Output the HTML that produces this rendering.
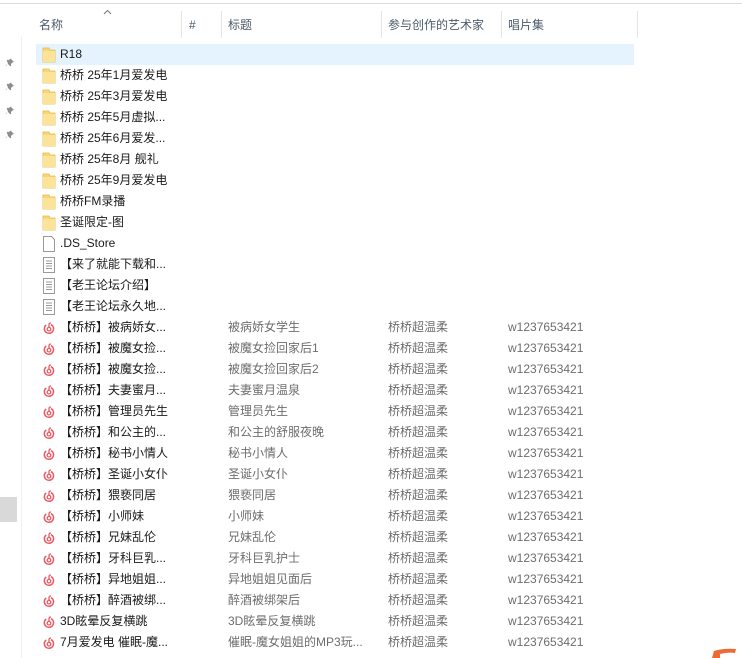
<!DOCTYPE html><html><head><meta charset="utf-8"><style>
body{margin:0;width:742px;height:658px;background:#fff;overflow:hidden;position:relative;font-family:"Liberation Sans","Noto Sans CJK SC",sans-serif;font-size:12px}
.a{position:absolute}
.h{position:absolute;top:17px;color:#4c5a6a;font-size:12px;line-height:16px}
.sep{position:absolute;top:11px;width:1px;height:27px;background:#e5e5e5}
.r{position:absolute;left:36px;width:598px;height:21px}
.r span{position:absolute;top:2px;white-space:nowrap;line-height:17px;height:17px}
.n{left:24px;color:#1a1a1a}
.t{left:192px;color:#6d6d6d}
.ar{left:352px;color:#6d6d6d}
.al{left:472px;color:#6d6d6d}
.ic{position:absolute;left:6px;top:3px}
.pin{position:absolute;left:5px}
</style></head><body>
<div class="a" style="left:0;top:3px;width:742px;height:1px;background:#dcdcdc"></div>
<div class="a" style="left:21px;top:36px;width:1px;height:622px;background:#f0f0f0"></div>
<div class="a" style="left:0;top:497px;width:17px;height:25px;background:#d9d9d9"></div>
<svg width="0" height="0" style="position:absolute"><defs>
<symbol id="p" viewBox="0 0 10 10"><path d="M5 1l4 4-1.5.5-1.5 1.5.2 1.8-1 .4L2.6 6.6 1 9 .6 8.6 3 6.4 1.8 3.8l.4-1L4 3l1.5-1.5z" fill="#8d8d8d"/></symbol>
<symbol id="f" viewBox="0 0 14 16"><path d="M1 1h6l1 2h5v12H1z" fill="#f8d775" stroke="#e0b94a" stroke-width="0.8"/><path d="M1 4h12v11H1z" fill="#fbe49a"/></symbol>
<symbol id="d" viewBox="0 0 14 16"><path d="M1.5 .5h8l3 3v12h-11z" fill="#fff" stroke="#9a9a9a"/></symbol>
<symbol id="x" viewBox="0 0 14 16"><path d="M1.5 .5h11v15h-11z" fill="#fff" stroke="#9a9a9a"/><path d="M4 4h6M4 6.5h6M4 9h6M4 11.5h6" stroke="#9a9a9a"/></symbol>
<symbol id="m" viewBox="0 0 14 16"><path d="M9 4.6A4.6 4.6 0 1 1 4.2 5" fill="none" stroke="#ec5a63" stroke-width="1.5"/><circle cx="7" cy="9.2" r="1.8" fill="none" stroke="#ec5a63" stroke-width="1.3"/><path d="M7 7.4V4.5Q7 3 9 3" fill="none" stroke="#ec5a63" stroke-width="1.3"/></symbol>
</defs></svg>
<svg class="pin" style="top:57px" width="10" height="10"><use href="#p"/></svg>
<svg class="pin" style="top:81px" width="10" height="10"><use href="#p"/></svg>
<svg class="pin" style="top:105px" width="10" height="10"><use href="#p"/></svg>
<svg class="pin" style="top:129px" width="10" height="10"><use href="#p"/></svg>
<svg class="a" style="left:103px;top:9px" width="9" height="6"><path d="M1 5l3.5-3.5L8 5" fill="none" stroke="#777" stroke-width="1"/></svg>
<div class="h" style="left:39px">名称</div>
<div class="sep" style="left:181px"></div><div class="h" style="left:189px">#</div>
<div class="sep" style="left:221px"></div><div class="h" style="left:228px">标题</div>
<div class="sep" style="left:381px"></div><div class="h" style="left:388px">参与创作的艺术家</div>
<div class="sep" style="left:501px"></div><div class="h" style="left:508px">唱片集</div>
<div class="sep" style="left:637px"></div>
<div class="r" style="top:44px;background:#e5f3ff"><svg class="ic" width="14" height="16"><use href="#f"/></svg><span class="n">R18</span></div>
<div class="r" style="top:65px"><svg class="ic" width="14" height="16"><use href="#f"/></svg><span class="n">桥桥 25年1月爱发电</span></div>
<div class="r" style="top:86px"><svg class="ic" width="14" height="16"><use href="#f"/></svg><span class="n">桥桥 25年3月爱发电</span></div>
<div class="r" style="top:107px"><svg class="ic" width="14" height="16"><use href="#f"/></svg><span class="n">桥桥 25年5月虚拟...</span></div>
<div class="r" style="top:128px"><svg class="ic" width="14" height="16"><use href="#f"/></svg><span class="n">桥桥 25年6月爱发...</span></div>
<div class="r" style="top:149px"><svg class="ic" width="14" height="16"><use href="#f"/></svg><span class="n">桥桥 25年8月 舰礼</span></div>
<div class="r" style="top:170px"><svg class="ic" width="14" height="16"><use href="#f"/></svg><span class="n">桥桥 25年9月爱发电</span></div>
<div class="r" style="top:191px"><svg class="ic" width="14" height="16"><use href="#f"/></svg><span class="n">桥桥FM录播</span></div>
<div class="r" style="top:212px"><svg class="ic" width="14" height="16"><use href="#f"/></svg><span class="n">圣诞限定-图</span></div>
<div class="r" style="top:233px"><svg class="ic" width="14" height="16"><use href="#d"/></svg><span class="n">.DS_Store</span></div>
<div class="r" style="top:254px"><svg class="ic" width="14" height="16"><use href="#x"/></svg><span class="n">【来了就能下载和...</span></div>
<div class="r" style="top:275px"><svg class="ic" width="14" height="16"><use href="#x"/></svg><span class="n">【老王论坛介绍】</span></div>
<div class="r" style="top:296px"><svg class="ic" width="14" height="16"><use href="#x"/></svg><span class="n">【老王论坛永久地...</span></div>
<div class="r" style="top:317px"><svg class="ic" width="14" height="16"><use href="#m"/></svg><span class="n">【桥桥】被病娇女...</span><span class="t">被病娇女学生</span><span class="ar">桥桥超温柔</span><span class="al">w1237653421</span></div>
<div class="r" style="top:338px"><svg class="ic" width="14" height="16"><use href="#m"/></svg><span class="n">【桥桥】被魔女捡...</span><span class="t">被魔女捡回家后1</span><span class="ar">桥桥超温柔</span><span class="al">w1237653421</span></div>
<div class="r" style="top:359px"><svg class="ic" width="14" height="16"><use href="#m"/></svg><span class="n">【桥桥】被魔女捡...</span><span class="t">被魔女捡回家后2</span><span class="ar">桥桥超温柔</span><span class="al">w1237653421</span></div>
<div class="r" style="top:380px"><svg class="ic" width="14" height="16"><use href="#m"/></svg><span class="n">【桥桥】夫妻蜜月...</span><span class="t">夫妻蜜月温泉</span><span class="ar">桥桥超温柔</span><span class="al">w1237653421</span></div>
<div class="r" style="top:401px"><svg class="ic" width="14" height="16"><use href="#m"/></svg><span class="n">【桥桥】管理员先生</span><span class="t">管理员先生</span><span class="ar">桥桥超温柔</span><span class="al">w1237653421</span></div>
<div class="r" style="top:422px"><svg class="ic" width="14" height="16"><use href="#m"/></svg><span class="n">【桥桥】和公主的...</span><span class="t">和公主的舒服夜晚</span><span class="ar">桥桥超温柔</span><span class="al">w1237653421</span></div>
<div class="r" style="top:443px"><svg class="ic" width="14" height="16"><use href="#m"/></svg><span class="n">【桥桥】秘书小情人</span><span class="t">秘书小情人</span><span class="ar">桥桥超温柔</span><span class="al">w1237653421</span></div>
<div class="r" style="top:464px"><svg class="ic" width="14" height="16"><use href="#m"/></svg><span class="n">【桥桥】圣诞小女仆</span><span class="t">圣诞小女仆</span><span class="ar">桥桥超温柔</span><span class="al">w1237653421</span></div>
<div class="r" style="top:485px"><svg class="ic" width="14" height="16"><use href="#m"/></svg><span class="n">【桥桥】猥亵同居</span><span class="t">猥亵同居</span><span class="ar">桥桥超温柔</span><span class="al">w1237653421</span></div>
<div class="r" style="top:506px"><svg class="ic" width="14" height="16"><use href="#m"/></svg><span class="n">【桥桥】小师妹</span><span class="t">小师妹</span><span class="ar">桥桥超温柔</span><span class="al">w1237653421</span></div>
<div class="r" style="top:527px"><svg class="ic" width="14" height="16"><use href="#m"/></svg><span class="n">【桥桥】兄妹乱伦</span><span class="t">兄妹乱伦</span><span class="ar">桥桥超温柔</span><span class="al">w1237653421</span></div>
<div class="r" style="top:548px"><svg class="ic" width="14" height="16"><use href="#m"/></svg><span class="n">【桥桥】牙科巨乳...</span><span class="t">牙科巨乳护士</span><span class="ar">桥桥超温柔</span><span class="al">w1237653421</span></div>
<div class="r" style="top:569px"><svg class="ic" width="14" height="16"><use href="#m"/></svg><span class="n">【桥桥】异地姐姐...</span><span class="t">异地姐姐见面后</span><span class="ar">桥桥超温柔</span><span class="al">w1237653421</span></div>
<div class="r" style="top:590px"><svg class="ic" width="14" height="16"><use href="#m"/></svg><span class="n">【桥桥】醉酒被绑...</span><span class="t">醉酒被绑架后</span><span class="ar">桥桥超温柔</span><span class="al">w1237653421</span></div>
<div class="r" style="top:611px"><svg class="ic" width="14" height="16"><use href="#m"/></svg><span class="n">3D眩晕反复横跳</span><span class="t">3D眩晕反复横跳</span><span class="ar">桥桥超温柔</span><span class="al">w1237653421</span></div>
<div class="r" style="top:632px"><svg class="ic" width="14" height="16"><use href="#m"/></svg><span class="n">7月爱发电 催眠-魔...</span><span class="t">催眠-魔女姐姐的MP3玩...</span><span class="ar">桥桥超温柔</span><span class="al">w1237653421</span></div>
<svg class="a" style="left:711px;top:648px" width="31" height="10"><path d="M1 10L3 3Q12 0 25 1L24 5Q16 4 9 6L9 10z" fill="#ef6a33"/></svg>
</body></html>
